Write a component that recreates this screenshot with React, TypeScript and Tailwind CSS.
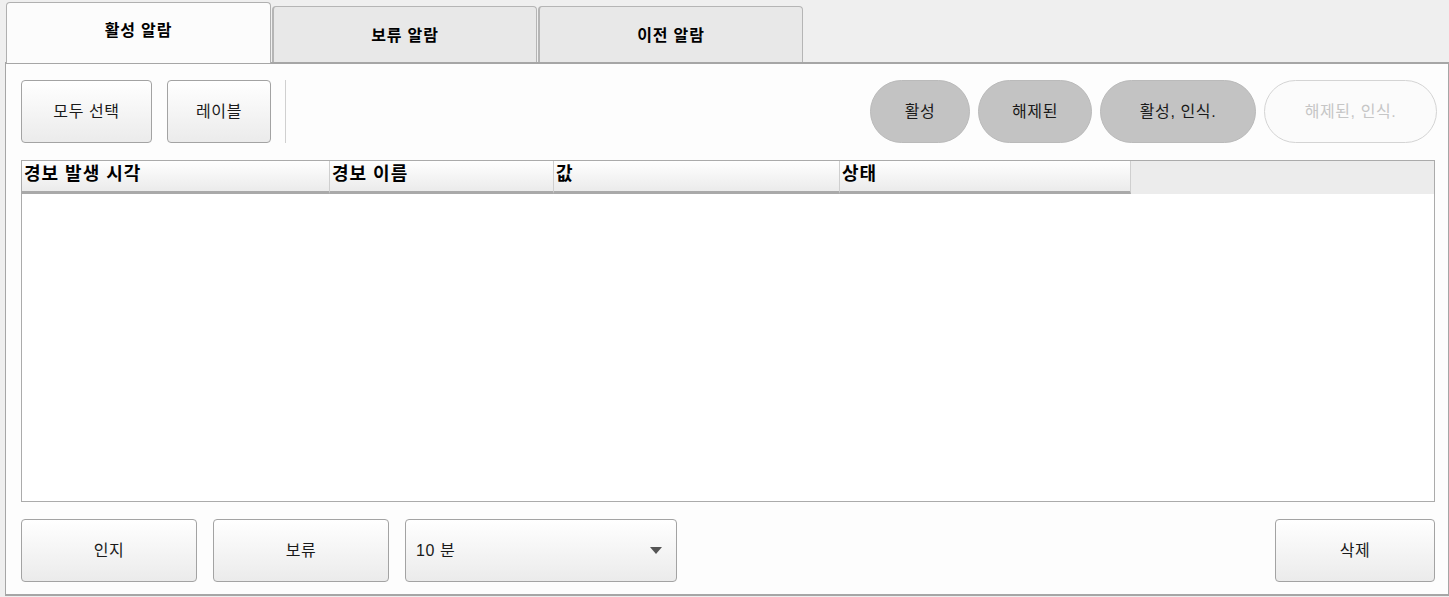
import React from 'react';

const font = "font-['Liberation_Sans','Noto_Sans_CJK_KR',sans-serif]";

const btn =
    'h-[63px] rounded-[4px] border border-[#a3a3a3] bg-gradient-to-b from-[#ffffff] to-[#ebebeb] text-[16px] tracking-[0.6px] text-[#1a1a1a] flex items-center justify-center';

const Tab: React.FC<{ label: string; active?: boolean }> = ({ label, active }) =>
    active ? (
        <div className="w-[265px] h-[61px] -mb-px relative z-10 rounded-t-[4px] border border-b-0 border-[#b0b0b0] bg-[#fcfcfc] flex items-center justify-center pb-[4px] text-[16px] tracking-[0.8px] font-bold text-black">
            {label}
        </div>
    ) : (
        <div className="w-[265px] h-[56px] rounded-t-[4px] border border-b-0 border-[#b5b5b5] border-l-[2px] bg-[#e8e8e8] flex items-center justify-center pt-[2px] text-[16px] tracking-[0.8px] font-bold text-black">
            {label}
        </div>
    );

const Pill: React.FC<{ label: string; w: string; off?: boolean }> = ({ label, w, off }) => (
    <div
        className={`${w} h-[63px] rounded-full flex items-center justify-center text-[16px] tracking-[0.6px] ${
            off ? 'bg-[#fbfbfb] border border-[#d4d4d4] text-[#c6c6c6]' : 'bg-[#c3c3c3] border border-[#bababa] text-[#1a1a1a]'
        }`}
    >
        {label}
    </div>
);

const columns = [
    { label: '경보 발생 시각', w: 'w-[308px]' },
    { label: '경보 이름', w: 'w-[224px]' },
    { label: '값', w: 'w-[286px]' },
    { label: '상태', w: 'w-[291px]' },
];

export default function App() {
    return (
        <div className={`w-[1449px] h-[597px] bg-[#efefef] ${font}`}>
            {/* Tabs */}
            <div className="h-[62px] flex items-end gap-px pl-[6px]">
                <Tab label="활성 알람" active />
                <Tab label="보류 알람" />
                <Tab label="이전 알람" />
            </div>

            {/* Panel */}
            <div className="ml-[5px] w-[1444px] h-[534px] border-2 border-[#a6a6a6] border-r border-l bg-[#fdfdfd] flex flex-col pl-[15px] pr-[12px] pt-[16px] pb-[12px]">
                <div className="flex items-center">
                    <div className={`${btn} w-[131px]`}>모두 선택</div>
                    <div className={`${btn} w-[104px] ml-[15px]`}>레이블</div>
                    <div className="w-px h-[63px] bg-[#d0d0d0] ml-[14px]" />
                    <div className="ml-auto -mr-px flex gap-[8px]">
                        <Pill label="활성" w="w-[100px]" />
                        <Pill label="해제된" w="w-[114px]" />
                        <Pill label="활성, 인식." w="w-[156px]" />
                        <Pill label="해제된, 인식." w="w-[173px]" off />
                    </div>
                </div>

                {/* Table */}
                <div className="mt-[17px] w-[1414px] h-[343px] border border-[#ababab] bg-white">
                    <div className="flex h-[33px] bg-[#ececec]">
                        {columns.map((c) => (
                            <div
                                key={c.label}
                                className={`${c.w} h-[33px] bg-gradient-to-b from-[#ffffff] to-[#ebebeb] border-r border-[#cfcfcf] border-b-[3px] border-b-[#a9a9a9] pl-[2px] text-[18px] tracking-[1px] font-semibold text-black leading-[26px]`}
                            >
                                {c.label}
                            </div>
                        ))}
                    </div>
                </div>

                {/* Bottom actions */}
                <div className="mt-[17px] flex items-center">
                    <div className={`${btn} w-[176px]`}>인지</div>
                    <div className={`${btn} w-[176px] ml-[16px]`}>보류</div>
                    <div className={`${btn} w-[272px] ml-[16px] !justify-between px-[10px]`}>
                        <span>10 분</span>
                        <svg width="12" height="8" viewBox="0 0 12 8" className="mr-[4px]">
                            <path d="M0 0 L12 0 L6 7 Z" fill="#555" />
                        </svg>
                    </div>
                    <div className={`${btn} w-[160px] ml-auto mr-px`}>삭제</div>
                </div>
            </div>
        </div>
    );
}
